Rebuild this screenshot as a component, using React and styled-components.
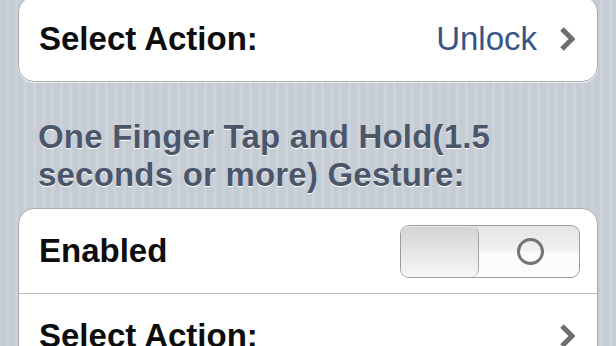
import React from "react";
import styled, { createGlobalStyle } from "styled-components";

const GlobalStyle = createGlobalStyle`
  html, body {
    margin: 0;
    padding: 0;
    height: 100%;
    overflow: hidden;
  }
  body {
    font-family: "Liberation Sans", Arial, Helvetica, sans-serif;
    background: repeating-linear-gradient(
      90deg,
      #c5ccd4 0px,
      #c5ccd4 6px,
      #cbd2d9 6px,
      #cbd2d9 9px
    );
  }
`;

const Screen = styled.div`
  padding: 0 18px 0 18px;
  width: 580px;
`;

const Group = styled.div`
  background: #fff;
  border: 1px solid #a8abaf;
  border-radius: 16px;
  box-shadow: 0 1px 0 rgba(255, 255, 255, 0.75);
  margin-top: ${(p) => p.$top || 0}px;
  overflow: hidden;
`;

const Row = styled.div`
  display: flex;
  align-items: center;
  height: 84px;
  padding: 0 22px 0 20px;
  border-top: ${(p) => (p.$first ? "none" : "1px solid #bdbdbd")};
`;

const Label = styled.div`
  flex: 1;
  font-size: 33px;
  font-weight: bold;
  color: #0d0d0d;
`;

const Value = styled.div`
  font-size: 33px;
  color: #385487;
  margin-right: 22px;
`;

const SectionHeader = styled.div`
  margin: 36px 0 14px;
  padding-left: 20px;
  font-size: 33px;
  line-height: 38px;
  font-weight: bold;
  letter-spacing: 0.2px;
  color: #4c566b;
  text-shadow: 0 1px 0 #fff;
`;

const Chevron = () => (
  <svg width="16" height="26" viewBox="0 0 16 26">
    <polyline
      points="3,3 13,13 3,23"
      fill="none"
      stroke="#6e6e6e"
      strokeWidth="5"
      strokeLinejoin="miter"
      strokeLinecap="butt"
    />
  </svg>
);

const Switch = styled.div`
  display: flex;
  width: 180px;
  height: 53px;
  box-sizing: border-box;
  margin-right: -5px;
  border: 1px solid #9c9c9c;
  border-radius: 9px;
  overflow: hidden;
  background: linear-gradient(#e6e6e6 0%, #f0f0f0 48%, #fafafa 52%, #fdfdfd 100%);
`;

const Knob = styled.div`
  width: 78px;
  height: 100%;
  box-sizing: border-box;
  border-right: 1px solid #a5a5a5;
  border-radius: 8px;
  background: linear-gradient(#d3d3d3, #f7f7f7);
  box-shadow: inset 0 1px 0 rgba(255, 255, 255, 0.6);
`;

const OffSide = styled.div`
  flex: 1;
  display: flex;
  align-items: center;
  justify-content: center;
  padding-left: 2px;
`;

const OffRing = styled.div`
  width: 21px;
  height: 21px;
  border: 3.5px solid #747474;
  border-radius: 50%;
`;

export default function App() {
  return (
    <>
      <GlobalStyle />
      <Screen>
        <Group $top={-4}>
          <Row $first>
            <Label>Select Action:</Label>
            <Value>Unlock</Value>
            <Chevron />
          </Row>
        </Group>
        <SectionHeader>
          One Finger Tap and Hold(1.5
          <br />
          seconds or more) Gesture:
        </SectionHeader>
        <Group>
          <Row $first>
            <Label>Enabled</Label>
            <Switch>
              <Knob />
              <OffSide>
                <OffRing />
              </OffSide>
            </Switch>
          </Row>
          <Row>
            <Label>Select Action:</Label>
            <Chevron />
          </Row>
        </Group>
      </Screen>
    </>
  );
}
